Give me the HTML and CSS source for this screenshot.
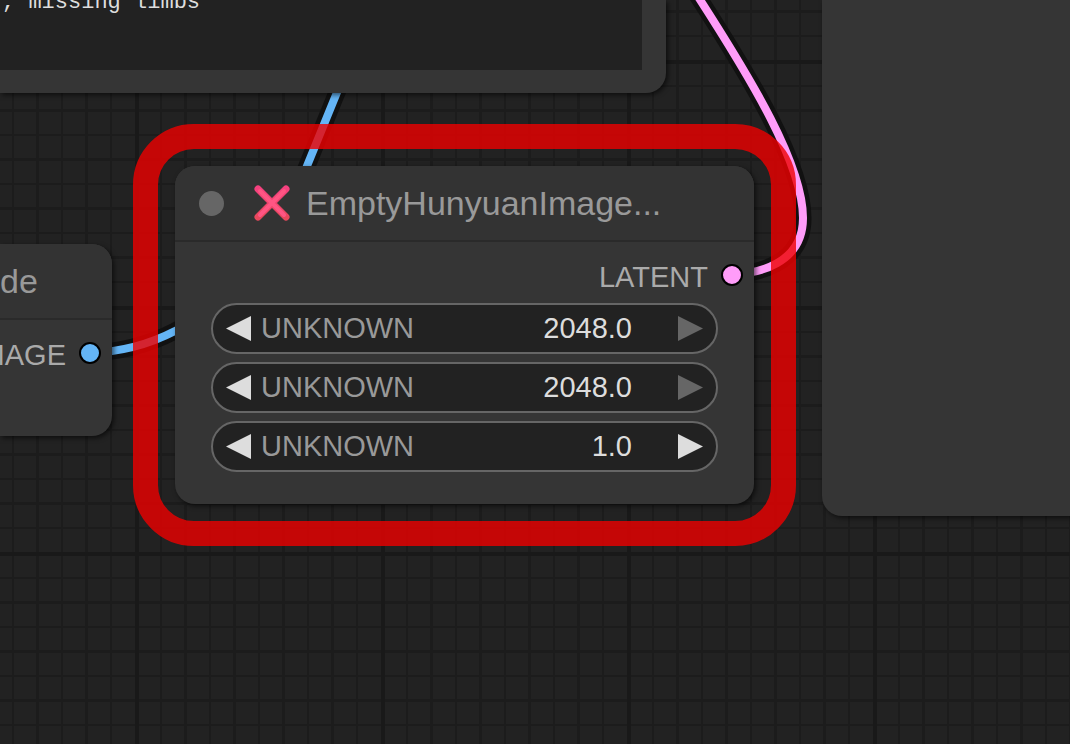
FILE: index.html
```
<!DOCTYPE html>
<html lang="en">
<head>
    <meta charset="utf-8">
    <meta name="viewport" content="width=device-width, initial-scale=1">
    <title>Workflow</title>
    <link rel="stylesheet" href="styles.css">
</head>
<body>
    <main class="canvas">
        <svg class="layer" aria-hidden="true">
            <defs>
                <pattern id="grid" x="135" y="60" width="246" height="246" patternUnits="userSpaceOnUse">
                    <path class="grid-minor" d="M26 0v246M75 0v246M124 0v246M173 0v246M222 0v246M0 26h246M0 75h246M0 124h246M0 173h246M0 222h246"/>
                    <path class="grid-half" d="M50.500 0v246M99.500 0v246M148.500 0v246M197.500 0v246M0 50.500h246M0 99.500h246M0 148.500h246M0 197.500h246"/>
                    <path class="grid-major" d="M2 0v246M0 2h246"/>
                </pattern>
            </defs>
            <rect width="100%" height="100%" fill="url(#grid)"/>
            <path class="link-edge" d="M89 353C122 352 150 344 175 331C240 300 279 236 307 166L340 85"/>
            <path class="link-image" d="M89 353C122 352 150 344 175 331C240 300 279 236 307 166L340 85"/>
            <path class="link-edge" d="M732 274C757 274 803 264 803 218C803 165 752 80 695 -8"/>
            <path class="link-latent" d="M732 274C757 274 803 264 803 218C803 165 752 80 695 -8"/>
        </svg>

        <section class="node node-prompt">
            <textarea class="prompt" aria-label="Prompt" spellcheck="false">, missing limbs</textarea>
        </section>

        <section class="node node-decode">
            <header class="node-title">de</header>
            <div class="output">IMAGE <span class="slot slot-image"></span></div>
        </section>

        <section class="node node-preview"></section>

        <section class="node node-empty">
            <header class="node-title">
                <span class="collapse-dot"></span>
                <svg class="cross" viewBox="0 0 36 36" aria-hidden="true">
                    <defs>
                        <linearGradient id="pink" x1="0" y1="0" x2="0" y2="1">
                            <stop offset="0" stop-color="#f5417f"/>
                            <stop offset="1" stop-color="#e8485c"/>
                        </linearGradient>
                    </defs>
                    <path d="M4 4L32 32M32 4L4 32" fill="none" stroke="url(#pink)" stroke-width="7" stroke-linecap="round"/>
                    <path d="M6 6L30 30M30 6L6 30" fill="none" stroke="#ff5583" stroke-width="4" stroke-linecap="round"/>
                </svg>
                <span class="node-name">EmptyHunyuanImage...</span>
            </header>
            <div class="output">LATENT <span class="slot slot-latent"></span></div>
            <div class="widgets">
                <div class="widget">
                    <button class="step" aria-label="Decrease"><svg viewBox="0 0 25 25"><path d="M25 0v25L0 12.500z"/></svg></button>
                    <label for="value1">UNKNOWN</label>
                    <input id="value1" type="text" value="2048.0">
                    <button class="step" aria-label="Increase" disabled><svg viewBox="0 0 25 25"><path d="M0 0v25L25 12.500z"/></svg></button>
                </div>
                <div class="widget">
                    <button class="step" aria-label="Decrease"><svg viewBox="0 0 25 25"><path d="M25 0v25L0 12.500z"/></svg></button>
                    <label for="value2">UNKNOWN</label>
                    <input id="value2" type="text" value="2048.0">
                    <button class="step" aria-label="Increase" disabled><svg viewBox="0 0 25 25"><path d="M0 0v25L25 12.500z"/></svg></button>
                </div>
                <div class="widget">
                    <button class="step" aria-label="Decrease"><svg viewBox="0 0 25 25"><path d="M25 0v25L0 12.500z"/></svg></button>
                    <label for="value3">UNKNOWN</label>
                    <input id="value3" type="text" value="1.0">
                    <button class="step" aria-label="Increase"><svg viewBox="0 0 25 25"><path d="M0 0v25L25 12.500z"/></svg></button>
                </div>
            </div>
        </section>

        <div class="error-outline"></div>
    </main>
</body>
</html>
```
FILE: styles.css
```
* {
    box-sizing: border-box;
}

body {
    margin: 0;
    background-color: #222;
    color: #aaa;
    font-family: "Liberation Sans", Arial, sans-serif;
    font-size: 29px;
}

.canvas {
    position: relative;
    height: 100vh;
    overflow: hidden;
}

/* grid and links */
.layer {
    position: absolute;
    width: 100%;
    height: 100%;
}

.layer path {
    fill: none;
}

.grid-minor {
    stroke: #1c1c1c;
    stroke-width: 2;
}

.grid-half {
    stroke: #1c1c1c;
    stroke-width: 3;
}

.grid-major {
    stroke: #191919;
    stroke-width: 4;
}

.layer .link-edge {
    stroke: #111;
    stroke-width: 17;
}

.layer .link-image {
    stroke: #64b5f6;
    stroke-width: 8;
}

.layer .link-latent {
    stroke: #ff9cf9;
    stroke-width: 8;
}

/* nodes */
.node {
    position: absolute;
    background-color: #353535;
    border-radius: 20px;
    box-shadow: 2px 2px 5px rgba(0, 0, 0, 0.6);
}

.node-prompt {
    top: 0;
    left: 0;
    width: 666px;
    padding: 0 24px 23px 0;
    border-radius: 0 0 20px 0;
}

.node-decode {
    top: 244px;
    left: 0;
    width: 112px;
    padding-bottom: 65px;
    border-radius: 0 20px 20px 0;
}

.node-preview {
    top: 0;
    left: 822px;
    right: 0;
    height: 516px;
    border-radius: 0 0 0 20px;
}

.node-empty {
    top: 166px;
    left: 175px;
    width: 579px;
}

.node-title {
    display: flex;
    align-items: center;
    height: 76px;
    border-bottom: 2px solid #2a2a2a;
    border-radius: inherit;
    border-bottom-left-radius: 0;
    border-bottom-right-radius: 0;
    background-color: #333;
    color: #999;
    font-size: 34px;
}

.node-empty .node-title {
    padding: 0 24px;
}

.collapse-dot {
    width: 25px;
    height: 25px;
    border-radius: 50%;
    background-color: #666;
}

.cross {
    width: 36px;
    height: 36px;
    margin: 0 16px 0 30px;
}

.output {
    display: flex;
    justify-content: flex-end;
    align-items: center;
    gap: 13px;
    height: 51px;
    padding: 19px 11px 0 0;
    line-height: 32px;
}

.slot {
    flex: none;
    width: 22px;
    height: 22px;
    margin-bottom: 5px;
    border: 2px solid #000;
    border-radius: 50%;
}

.slot-image {
    background-color: #64b5f6;
}

.slot-latent {
    background-color: #ff9cf9;
}

.prompt {
    display: block;
    width: 100%;
    height: 70px;
    padding: 0 2px;
    border: none;
    outline: none;
    resize: none;
    overflow: hidden;
    background-color: #222;
    color: #ddd;
    font-family: "Liberation Mono", monospace;
    font-size: 22px;
    line-height: 6px;
}

/* number widgets */
.widgets {
    display: flex;
    flex-direction: column;
    gap: 8px;
    padding: 10px 36px 32px;
}

.widget {
    display: flex;
    align-items: center;
    height: 51px;
    padding: 0 13px;
    border: 2px solid #666;
    border-radius: 26px;
    background-color: #222;
}

.widget label {
    margin-left: 10px;
    color: #999;
}

.widget input {
    flex: 1;
    min-width: 0;
    margin-right: 46px;
    padding: 0;
    border: none;
    outline: none;
    background: none;
    color: #ddd;
    font: inherit;
    text-align: right;
}

.step {
    width: 25px;
    height: 25px;
    padding: 0;
    border: none;
    background: none;
    cursor: pointer;
}

.step svg {
    display: block;
    fill: #ddd;
}

.step:disabled svg {
    fill: #666;
}

.error-outline {
    position: absolute;
    top: 124px;
    left: 133px;
    width: 663px;
    height: 422px;
    border: 25px solid rgba(239, 0, 0, 0.8);
    border-radius: 61px;
    pointer-events: none;
}
```
